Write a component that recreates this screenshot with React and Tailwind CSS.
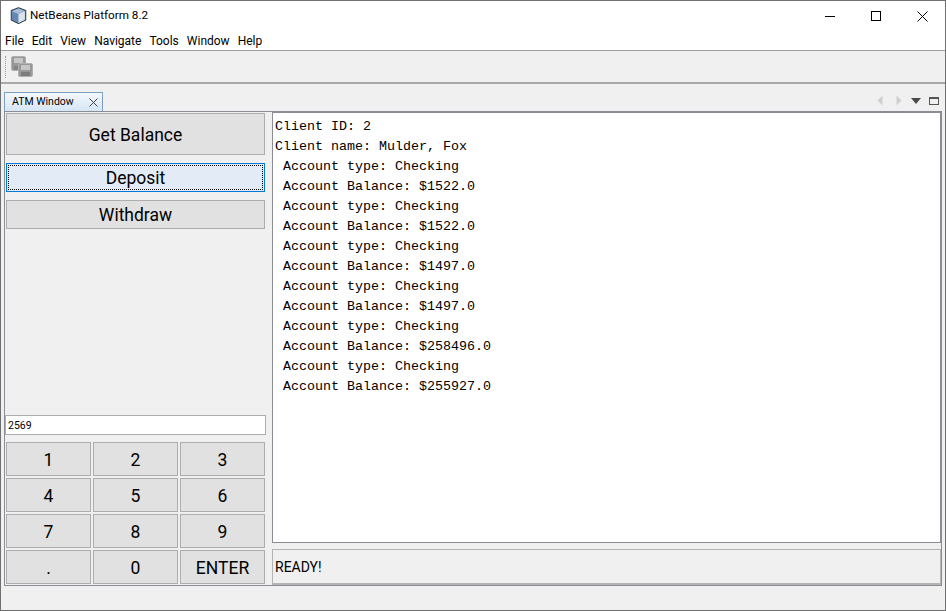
import React from "react";

const MENU = ["File", "Edit", "View", "Navigate", "Tools", "Window", "Help"];
const KEYS = ["1", "2", "3", "4", "5", "6", "7", "8", "9", ".", "0", "ENTER"];
const LOG = [
  "Client ID: 2",
  "Client name: Mulder, Fox",
  " Account type: Checking",
  " Account Balance: $1522.0",
  " Account type: Checking",
  " Account Balance: $1522.0",
  " Account type: Checking",
  " Account Balance: $1497.0",
  " Account type: Checking",
  " Account Balance: $1497.0",
  " Account type: Checking",
  " Account Balance: $258496.0",
  " Account type: Checking",
  " Account Balance: $255927.0",
];

function CubeIcon() {
  return (
    <svg width="17" height="17" viewBox="0 0 16 16">
      <path d="M8 .6 14.8 3.4V12.2L8 15.6 1.2 12.2V3.4Z" fill="#7f9fc4" stroke="#33404f" strokeWidth="1" strokeLinejoin="round" />
      <path d="M2 4 8 6.6V15L2 12Z" fill="#6487b3" />
      <path d="M8 6.6 14 4V12L8 15Z" fill="#dbe3ec" />
      <path d="M2 4 8 1.4 14 4 8 6.6Z" fill="#a9bdd6" />
    </svg>
  );
}

function SaveAllIcon() {
  return (
    <svg width="22" height="21" viewBox="0 0 22 21">
      <rect x="0.5" y="0.5" width="14" height="14" rx="1.5" fill="#989898" stroke="#b0b0b0" />
      <rect x="3" y="2" width="9" height="5" fill="#c6c6c6" />
      <rect x="3" y="10" width="9" height="4" fill="#858585" />
      <rect x="7.5" y="7.5" width="14" height="13" rx="1.5" fill="#989898" stroke="#b0b0b0" />
      <rect x="10" y="9" width="9" height="5" fill="#c6c6c6" />
      <rect x="10" y="16" width="9" height="4" fill="#7c7c7c" />
    </svg>
  );
}

function WindowButtons() {
  return (
    <div className="flex items-center">
      <div className="flex h-[30px] w-[46px] items-center justify-center">
        <div className="h-px w-[10px] bg-black" />
      </div>
      <div className="flex h-[30px] w-[46px] items-center justify-center">
        <div className="h-[10px] w-[10px] border border-black" />
      </div>
      <div className="flex h-[30px] w-[46px] items-center justify-center">
        <svg width="11" height="11" viewBox="0 0 11 11">
          <path d="M.5.5l10 10M10.5.5l-10 10" stroke="#000" strokeWidth="1" />
        </svg>
      </div>
    </div>
  );
}

function TabControls() {
  return (
    <div className="flex items-center pr-[5px]">
      <svg width="6" height="11" viewBox="0 0 6 11" className="mr-[13px]">
        <path d="M5.5 .5V10.5L.5 5.5Z" fill="#cfcfcf" />
      </svg>
      <svg width="6" height="11" viewBox="0 0 6 11" className="mr-[9px]">
        <path d="M.5 .5V10.5L5.5 5.5Z" fill="#cfcfcf" />
      </svg>
      <svg width="10" height="6" viewBox="0 0 10 6" className="mr-[8px]">
        <path d="M0 0H10L5 6Z" fill="#4a4a4a" />
      </svg>
      <div className="h-[8px] w-[10px] border border-t-2 border-[#555]" />
    </div>
  );
}

function ActionButton({ label, className = "" }) {
  return (
    <button
      type="button"
      className={`flex items-center justify-center border border-[#adadad] bg-[#e1e1e1] pt-[2px] text-[17.5px] text-black ${className}`}
    >
      {label}
    </button>
  );
}

export default function App() {
  return (
    <div className="flex h-[611px] w-[946px] flex-col overflow-hidden border border-[#6f6f6f] bg-[#f0f0f0] font-['Roboto',sans-serif] text-black">
      <div className="flex h-[30px] items-center justify-between bg-white pl-[9px]">
        <div className="flex items-center gap-[3px] text-[11.7px]">
          <CubeIcon />
          <span>NetBeans Platform 8.2</span>
        </div>
        <WindowButtons />
      </div>

      <div className="box-content flex h-[19px] items-center gap-[8px] border-b border-[#a0a0a0] bg-white pl-[4px] text-[12px]">
        {MENU.map((item) => (
          <span key={item}>{item}</span>
        ))}
      </div>

      <div className="flex h-[33px] items-center border-b-2 border-[#a8a8a8] pl-[4px]">
        <div className="mr-[5px] h-[22px] border-l border-dotted border-[#999]" />
        <SaveAllIcon />
      </div>

      <div className="flex h-[27px] items-end justify-between pl-[3px] pr-[1px]">
        <div className="flex h-[19px] w-[99px] items-center justify-between border border-b-0 border-[#7d9fc0] bg-[linear-gradient(#f4f8fc,#d6e6f5)] pl-[7px] pr-[3px] text-[10.5px]">
          <span>ATM Window</span>
          <svg width="9" height="9" viewBox="0 0 9 9" className="mr-[1px]">
            <path d="M.5.5l8 8M8.5.5l-8 8" stroke="#444" strokeWidth="1" />
          </svg>
        </div>
        <div className="mb-[5px]">
          <TabControls />
        </div>
      </div>

      <div className="mx-[3px] flex h-[475px] gap-[6px] border border-[#8a8d94] pt-[1px]">
        <div className="flex w-[261px] flex-col pb-[1px]">
          <ActionButton label="Get Balance" className="ml-[1px] h-[42px] w-[259px]" />
          <div className="ml-[1px] mt-[8px] h-[29px] w-[259px] border border-[#0078d7] bg-[#e3ebf6] p-px">
            <button
              type="button"
              className="flex h-full w-full items-center justify-center border border-dotted border-black pt-[2px] text-[17.5px]"
            >
              Deposit
            </button>
          </div>
          <ActionButton label="Withdraw" className="ml-[1px] mt-[8px] h-[29px] w-[259px]" />
          <input
            readOnly
            value="2569"
            className="mt-auto h-[20px] w-[261px] border border-[#adadad] bg-white pl-[2px] text-[10.5px] outline-none"
          />
          <div className="ml-[1px] mt-[7px] grid w-[259px] grid-cols-3 grid-rows-[34px_34px_34px_34px] gap-[2px]">
            {KEYS.map((key) => (
              <ActionButton key={key} label={key} />
            ))}
          </div>
        </div>

        <div className="flex min-w-0 flex-1 flex-col gap-[6px]">
          <div className="-mt-px h-[432px] border border-[#8a8d94] bg-white pl-[2px] pt-[4px] font-['Liberation_Mono',monospace] text-[13.33px] leading-[20px] whitespace-pre">
            {LOG.map((line, i) => (
              <div key={i}>{line}</div>
            ))}
          </div>
          <div className="flex h-[36px] items-center border border-b-2 border-[#b4b4b4] pl-[2px] pt-[2px] text-[14px]">
            READY!
          </div>
        </div>
      </div>
    </div>
  );
}
